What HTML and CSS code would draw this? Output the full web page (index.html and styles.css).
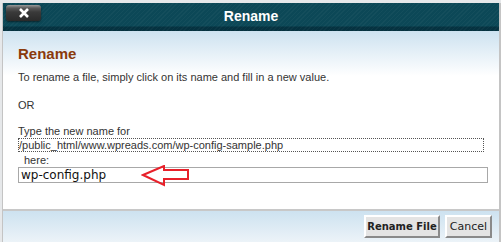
FILE: index.html
```html
<!DOCTYPE html>
<html lang="en">
<head>
    <meta charset="UTF-8">
    <title>Rename</title>
    <link rel="stylesheet" href="styles.css">
</head>
<body>

<div class="dialog">
    <div class="titlebar">
        <span class="close-btn">
            <svg width="12" height="10" viewBox="0 0 12 10"><path d="M2 1 L10 9 M10 1 L2 9" stroke="#fff" stroke-width="2.6"/></svg>
        </span>
        <h1>Rename</h1>
        <span></span>
    </div>

    <div class="content">
        <h2>Rename</h2>
        <p>To rename a file, simply click on its name and fill in a new value.</p>
        <p class="or">OR</p>
        <p class="type-label">Type the new name for</p>
        <div class="path">/public_html/www.wpreads.com/wp-config-sample.php</div>
        <div class="here">here:</div>
        <div class="input-wrap">
            <input type="text" class="input-field" value="wp-config.php">
            <svg class="arrow" width="50" height="22" viewBox="0 0 50 22">
                <polygon points="2,10 23,1 23,5 47,5 47,14 23,14 23,20" fill="none" stroke="#e8202a" stroke-width="2" stroke-linejoin="miter"/>
            </svg>
        </div>
    </div>

    <div class="footer">
        <button class="btn btn-main">Rename File</button>
        <button class="btn btn-cancel">Cancel</button>
    </div>
</div>

</body>
</html>
```

FILE: styles.css
```css
body {
    margin: 0;
    padding: 0;
    background-color: #e6e8ea;
    font-family: 'Liberation Sans', Arial, sans-serif;
}
.dialog {
    margin: 3px 0 0 2px;
    width: 496px;
    background-color: #fff;
    border-left: 1px solid #c4c4c4;
    border-right: 2px solid #c4c4c4;
    border-bottom: 2px solid #c4c4c4;
}
.titlebar {
    height: 28px;
    display: grid;
    grid-template-columns: 1fr auto 1fr;
    align-items: start;
    background:
        repeating-linear-gradient(135deg, rgba(255, 255, 255, 0.03) 0 1px, transparent 1px 3px),
        linear-gradient(to bottom, #0c4857 0, #0c4857 23px, #053240 24px, #053240 28px);
}
.titlebar h1 {
    margin: 0;
    padding-top: 5px;
    color: #fff;
    font-size: 14px;
    font-weight: bold;
}
.close-btn {
    margin: 2px 0 0 3px;
    width: 35px;
    height: 16px;
    display: flex;
    align-items: center;
    justify-content: center;
    border-radius: 3px;
    background: linear-gradient(to bottom, #9a9a9a 0, #5a5a5a 3px, #3a3a3a 7px, #2a2a2a 100%);
    box-shadow: 0 1px 2px rgba(0, 0, 0, 0.5);
}
.content {
    padding: 14px 15px 26px 15px;
    background: linear-gradient(to bottom, #cde2f0 0, #ffffff 45px);
    color: #333;
    font-size: 11px;
}
.content h2 {
    margin: 0 0 9px 0;
    color: #8a3a0c;
    font-size: 15px;
    font-weight: bold;
}
.content p {
    margin: 0;
}
.or {
    margin-top: 16px !important;
}
.type-label {
    margin-top: 14px !important;
    line-height: 13px;
}
.path {
    border: 1px dotted #555;
    line-height: 12px;
}
.here {
    padding: 2px 0 0 6px;
    line-height: 13px;
}
.input-wrap {
    position: relative;
}
.input-field {
    box-sizing: border-box;
    width: 470px;
    height: 16px;
    margin: 0;
    padding: 0 2px;
    border: 1px solid #a8a8a8;
    font-family: 'DejaVu Sans', Verdana, sans-serif;
    font-size: 12px;
    color: #111;
    display: block;
}
.arrow {
    position: absolute;
    left: 123px;
    top: -2px;
}
.footer {
    border-top: 2px solid #c8c8c8;
    height: 31px;
    display: flex;
    justify-content: flex-end;
    align-items: center;
    gap: 5px;
    padding-right: 7px;
    background: linear-gradient(to bottom, #cde2f0 0, #ecf3f8 100%);
}
.btn {
    height: 23px;
    padding: 0 1px;
    background-color: #e4e4e4;
    border-top: 2px solid #fff;
    border-left: 2px solid #fff;
    border-right: 2px solid #8a8a8a;
    border-bottom: 2px solid #8a8a8a;
    font-family: 'DejaVu Sans', Verdana, sans-serif;
    font-size: 10px;
    color: #222;
}
.btn-main {
    font-weight: bold;
}
.btn-cancel {
    padding: 0 3px;
    font-size: 11px;
}
```
